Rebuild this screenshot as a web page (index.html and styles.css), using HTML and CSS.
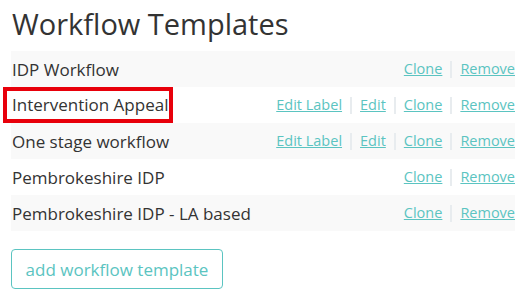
FILE: index.html
```html
<!DOCTYPE html>
<html>
<head>
<meta charset="utf-8">
<link rel="stylesheet" href="styles.css">
</head>
<body>
<div class="page">
  <h1 class="title">Workflow Templates</h1>
  <div class="list">
    <div class="row">
      <span class="name">IDP Workflow</span>
      <span class="actions"><a href="#">Clone</a><span class="sep"></span><a href="#">Remove</a></span>
    </div>
    <div class="row">
      <span class="name highlight">Intervention Appeal</span>
      <span class="actions"><a href="#">Edit Label</a><span class="sep"></span><a href="#">Edit</a><span class="sep"></span><a href="#">Clone</a><span class="sep"></span><a href="#">Remove</a></span>
    </div>
    <div class="row">
      <span class="name">One stage workflow</span>
      <span class="actions"><a href="#">Edit Label</a><span class="sep"></span><a href="#">Edit</a><span class="sep"></span><a href="#">Clone</a><span class="sep"></span><a href="#">Remove</a></span>
    </div>
    <div class="row">
      <span class="name">Pembrokeshire IDP</span>
      <span class="actions"><a href="#">Clone</a><span class="sep"></span><a href="#">Remove</a></span>
    </div>
    <div class="row">
      <span class="name">Pembrokeshire IDP - LA based</span>
      <span class="actions"><a href="#">Clone</a><span class="sep"></span><a href="#">Remove</a></span>
    </div>
  </div>
  <button class="add-btn">add workflow template</button>
</div>
</body>
</html>
```
FILE: styles.css
```css
html, body {
  margin: 0;
  padding: 0;
  background: #fff;
}
.page {
  font-family: "Open Sans", "Liberation Sans", sans-serif;
  color: #333;
  padding: 0 12px 0 11px;
}
.title {
  margin: 0;
  padding-top: 2px;
  height: 49px;
  font-size: 29px;
  font-weight: 400;
  line-height: 44px;
  padding-left: 1px;
}
.list {
  display: flex;
  flex-direction: column;
}
.row {
  display: flex;
  align-items: center;
  justify-content: space-between;
  height: 36px;
  padding-left: 1px;
  font-size: 17px;
}
.row:nth-child(odd) {
  background: #f9f9f9;
}
.name {
  line-height: 23px;
}
.highlight {
  padding: 2px 1px 3px 5px;
  margin: 0 -1px 0 -5px;
  outline: 4px solid #e8000b;
}
.actions {
  display: flex;
  align-items: center;
  font-size: 14.5px;
  line-height: 20px;
}
.actions a {
  color: #5bc4c1;
  text-decoration: underline;
}
.sep {
  width: 2px;
  height: 17px;
  background: #e8ecef;
  margin: 0 8px 0 8px;
}
.add-btn {
  margin-top: 18px;
  width: 212px;
  height: 40px;
  background: #fff;
  border: 1px solid #5bc4c1;
  border-radius: 4px;
  color: #5bc4c1;
  font-family: "Open Sans", "Liberation Sans", sans-serif;
  font-size: 17px;
  padding: 0;
}
```
